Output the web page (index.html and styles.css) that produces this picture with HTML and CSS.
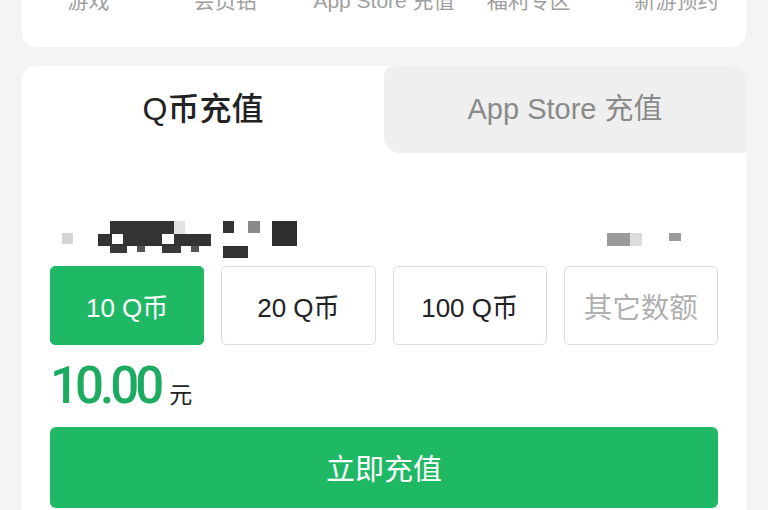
FILE: index.html
```html
<!DOCTYPE html>
<html lang="zh">
<head>
<meta charset="utf-8">
<title>Q币充值</title>
<link rel="stylesheet" href="styles.css">
</head>
<body>
<div class="page">
  <nav class="top-card">
    <div class="nav-row">
      <span class="nav-item">游戏</span>
      <span class="nav-item">会员钻</span>
      <span class="nav-item">App Store 充值</span>
      <span class="nav-item">福利专区</span>
      <span class="nav-item">新游预约</span>
    </div>
  </nav>

  <section class="pay-card">
    <div class="tabs">
      <div class="tab tab-active">Q币充值</div>
      <div class="tab tab-inactive">App Store 充值</div>
    </div>
    <div class="pay-body">
      <svg class="mosaic" viewBox="0 0 724 46" width="724" height="46" aria-hidden="true">
        <rect x="40" y="17" width="11" height="11" fill="#d4d4d4"/>
        <rect x="88" y="5" width="64" height="13" fill="#333"/>
        <rect x="152" y="5" width="11" height="13" fill="#e2e2e2"/>
        <rect x="76" y="18" width="113" height="12" fill="#333"/>
        <rect x="90" y="18" width="11" height="10" fill="#fff"/>
        <rect x="140" y="18" width="12" height="10" fill="#fff"/>
        <rect x="88" y="30" width="17" height="7" fill="#3a3a3a"/>
        <rect x="115" y="30" width="8" height="6" fill="#555"/>
        <rect x="140" y="30" width="19" height="7" fill="#3a3a3a"/>
        <rect x="169" y="30" width="8" height="6" fill="#555"/>
        <rect x="201" y="5" width="11" height="12" fill="#333"/>
        <rect x="226" y="5" width="12" height="12" fill="#8a8a8a"/>
        <rect x="250" y="5" width="25" height="25" fill="#2f2f2f"/>
        <rect x="201" y="30" width="25" height="12" fill="#333"/>
        <rect x="585" y="17" width="23" height="13" fill="#9a9a9a"/>
        <rect x="608" y="17" width="12" height="13" fill="#dcdcdc"/>
        <rect x="647" y="17" width="12" height="8" fill="#9a9a9a"/>
      </svg>

      <div class="options">
        <button class="opt opt-selected">10 Q币</button>
        <button class="opt">20 Q币</button>
        <button class="opt">100 Q币</button>
        <button class="opt opt-other">其它数额</button>
      </div>

      <div class="price">
        <span class="price-num">10.00</span>
        <span class="price-unit">元</span>
      </div>

      <button class="submit">立即充值</button>
    </div>
  </section>
</div>
</body>
</html>
```

FILE: styles.css
```css
* { box-sizing: border-box; }
html, body {
  margin: 0;
  padding: 0;
  background: #f4f4f4;
  overflow: hidden;
}
body {
  width: 768px;
  height: 510px;
  font-family: "Noto Sans CJK SC", "Noto Sans", sans-serif;
}
.page {
  padding: 0 22px;
}
.top-card {
  background: #fff;
  border-radius: 0 0 14px 14px;
  height: 47px;
  margin-bottom: 19px;
  overflow: hidden;
}
.nav-row {
  display: grid;
  grid-template-columns: repeat(5, 1fr);
  margin-top: -14px;
}
.nav-item {
  text-align: center;
  font-family: "Liberation Sans", "Noto Sans CJK SC", sans-serif;
  font-size: 21px;
  line-height: 30px;
  color: #a0a0a0;
  white-space: nowrap;
}
.nav-item:nth-child(1) { transform: translateX(-6px); }
.nav-item:nth-child(2) { transform: translateX(-14px); }
.nav-item:nth-child(5) { transform: translateX(3px); }

.pay-card {
  background: #fff;
  border-radius: 14px 14px 0 0;
  height: 460px;
}
.tabs {
  display: flex;
  height: 87px;
}
.tab {
  flex: 1 1 0;
  display: flex;
  align-items: center;
  justify-content: center;
  padding-bottom: 7px;
}
.tab-active {
  font-family: "Liberation Sans", "Noto Sans CJK SC", sans-serif;
  font-size: 32px;
  font-weight: 500;
  color: #222;
  border-radius: 14px 0 0 0;
}
.tab-inactive {
  background: #efefef;
  color: #8a8a8a;
  font-size: 29px;
  border-radius: 10px 14px 0 16px;
  font-family: "Liberation Sans", "Noto Sans CJK SC", sans-serif;
}
.pay-body {
  padding: 0 28px;
}
.mosaic {
  display: block;
  margin: 63px 0 0 -28px;
}
.options {
  display: grid;
  grid-template-columns: repeat(4, 1fr);
  gap: 17px;
  margin-top: 4px;
}
.opt {
  height: 79px;
  border: 1.5px solid #dedede;
  background: #fff;
  border-radius: 5px;
  font-family: "Liberation Sans", "Noto Sans CJK SC", sans-serif;
  font-size: 26px;
  color: #222;
  padding: 0;
}
.opt-selected {
  background: #1fb865;
  border-color: #1fb865;
  color: #fff;
}
.opt-other {
  color: #b0b0b0;
  font-size: 28.5px;
}
.price {
  display: flex;
  align-items: baseline;
  gap: 9px;
  height: 82px;
  padding-top: 5px;
}
.price-num {
  font-family: "Roboto", sans-serif;
  font-size: 51px;
  font-weight: 500;
  letter-spacing: -4px;
  color: #1dab62;
  line-height: 72px;
}
.price-unit {
  font-size: 23px;
  color: #222;
}
.submit {
  display: block;
  width: 100%;
  height: 81px;
  border: none;
  border-radius: 6px;
  background: #1fb865;
  color: #fff;
  font-family: "Noto Sans CJK SC", sans-serif;
  font-size: 29px;
  padding: 0 0 2px;
}
```
